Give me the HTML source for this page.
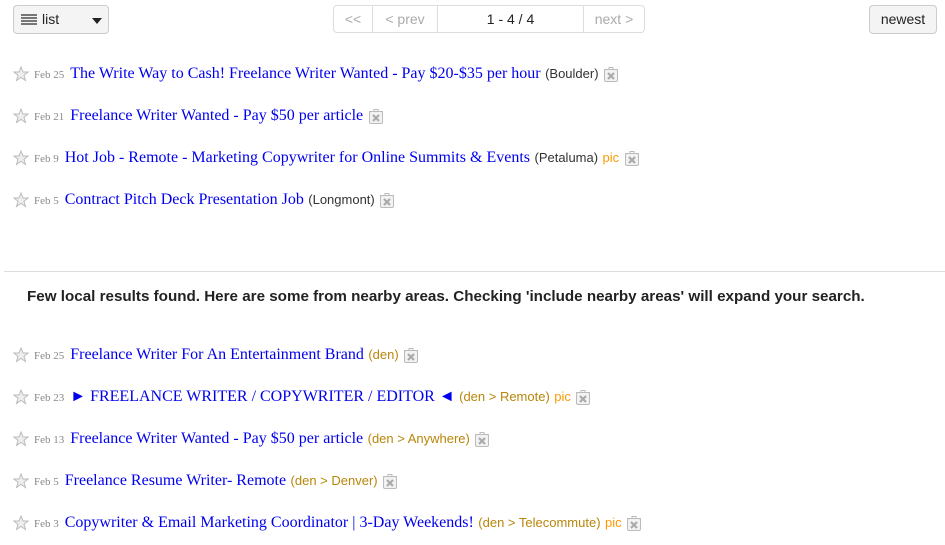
<!DOCTYPE html>
<html><head><meta charset="utf-8"><style>
body{margin:0;width:945px;height:545px;background:#fff;position:relative;overflow:hidden;font-family:"Liberation Sans",sans-serif}
.btn{position:absolute;border:1px solid #ccc;border-radius:4px;background:#f4f4f4;box-sizing:border-box;font-size:14px;color:#222}
.pager{position:absolute;left:333px;top:5px;width:312px;height:28px;border:1px solid #ddd;border-radius:4px;box-sizing:border-box;display:flex;font-size:14px;color:#aaa}
.pager div{border-right:1px solid #ddd;line-height:26px;text-align:center}
.pager div:last-child{border-right:none}
.row{position:absolute;left:13px;white-space:nowrap;height:20px;line-height:20px}
.row svg{vertical-align:middle}
.d{font-family:"Liberation Serif",serif;font-size:11px;color:#888;margin:0 6px 0 5px}
.t{font-family:"Liberation Serif",serif;font-size:16px;color:#00e}
.l{font-size:13px;color:#333}
.n{font-size:13px;color:#b8860b}
.p{font-size:13px;color:#f90}
</style></head><body>
<div class="btn" style="left:13px;top:5px;width:96px;height:29px">
<svg style="position:absolute;left:7px;top:8px" width="16" height="11"><g stroke="#333" stroke-width="1.3"><line x1="0" y1="1" x2="16" y2="1"/><line x1="0" y1="4" x2="16" y2="4"/><line x1="0" y1="7" x2="16" y2="7"/><line x1="0" y1="10" x2="16" y2="10"/></g></svg>
<span style="position:absolute;left:28px;top:5px">list</span>
<svg style="position:absolute;left:78px;top:12px" width="10" height="6"><path d="M0 0H10L5 6Z" fill="#222"/></svg>
</div>
<div class="pager"><div style="width:38px">&lt;&lt;</div><div style="width:64px">&lt; prev</div><div style="width:145px;color:#222">1 - 4 / 4</div><div style="flex:1">next &gt;</div></div>
<div class="btn" style="left:869px;top:5px;width:68px;height:29px;line-height:27px;text-align:center">newest</div>

<svg width="0" height="0" style="position:absolute"><defs>
<symbol id="s" viewBox="0 0 16 16"><path d="M8 1L10 6H15L11 9.3L12.5 14.5L8 11.4L3.5 14.5L5 9.3L1 6H6Z" fill="#eee" stroke="#bbb"/></symbol>
<symbol id="x" viewBox="0 0 16 16"><rect x="1.5" y="3.5" width="13" height="12" rx="1.5" fill="#f2f2f2" stroke="#bbb"/><path d="M1 3.5H15M6 3.5V1.5H10V3.5" stroke="#bbb" fill="none"/><path d="M5 7L11 13M11 7L5 13" stroke="#aaa" stroke-width="2.2"/></symbol>
</defs></svg>

<div class="row" style="top:64px"><svg width="16" height="16"><use href="#s"/></svg><span class="d">Feb 25</span><span class="t">The Write Way to Cash! Freelance Writer Wanted - Pay $20-$35 per hour</span> <span class="l">(Boulder)</span> <svg width="16" height="16"><use href="#x"/></svg></div>
<div class="row" style="top:106px"><svg width="16" height="16"><use href="#s"/></svg><span class="d">Feb 21</span><span class="t">Freelance Writer Wanted - Pay $50 per article</span> <svg width="16" height="16"><use href="#x"/></svg></div>
<div class="row" style="top:148px"><svg width="16" height="16"><use href="#s"/></svg><span class="d">Feb 9</span><span class="t">Hot Job - Remote - Marketing Copywriter for Online Summits &amp; Events</span> <span class="l">(Petaluma)</span> <span class="p">pic</span> <svg width="16" height="16"><use href="#x"/></svg></div>
<div class="row" style="top:190px"><svg width="16" height="16"><use href="#s"/></svg><span class="d">Feb 5</span><span class="t">Contract Pitch Deck Presentation Job</span> <span class="l">(Longmont)</span> <svg width="16" height="16"><use href="#x"/></svg></div>

<div style="position:absolute;left:4px;top:271px;width:941px;border-top:1px solid #ddd"></div>
<div style="position:absolute;left:27px;top:288px;font-size:15.2px;font-weight:bold;color:#222;white-space:nowrap">Few local results found. Here are some from nearby areas. Checking 'include nearby areas' will expand your search.</div>

<div class="row" style="top:345px"><svg width="16" height="16"><use href="#s"/></svg><span class="d">Feb 25</span><span class="t">Freelance Writer For An Entertainment Brand</span> <span class="n">(den)</span> <svg width="16" height="16"><use href="#x"/></svg></div>
<div class="row" style="top:387px"><svg width="16" height="16"><use href="#s"/></svg><span class="d">Feb 23</span><span class="t">► FREELANCE WRITER / COPYWRITER / EDITOR ◄</span> <span class="n">(den &gt; Remote)</span> <span class="p">pic</span> <svg width="16" height="16"><use href="#x"/></svg></div>
<div class="row" style="top:429px"><svg width="16" height="16"><use href="#s"/></svg><span class="d">Feb 13</span><span class="t">Freelance Writer Wanted - Pay $50 per article</span> <span class="n">(den &gt; Anywhere)</span> <svg width="16" height="16"><use href="#x"/></svg></div>
<div class="row" style="top:471px"><svg width="16" height="16"><use href="#s"/></svg><span class="d">Feb 5</span><span class="t">Freelance Resume Writer- Remote</span> <span class="n">(den &gt; Denver)</span> <svg width="16" height="16"><use href="#x"/></svg></div>
<div class="row" style="top:513px"><svg width="16" height="16"><use href="#s"/></svg><span class="d">Feb 3</span><span class="t">Copywriter &amp; Email Marketing Coordinator | 3-Day Weekends!</span> <span class="n">(den &gt; Telecommute)</span> <span class="p">pic</span> <svg width="16" height="16"><use href="#x"/></svg></div>
</body></html>
